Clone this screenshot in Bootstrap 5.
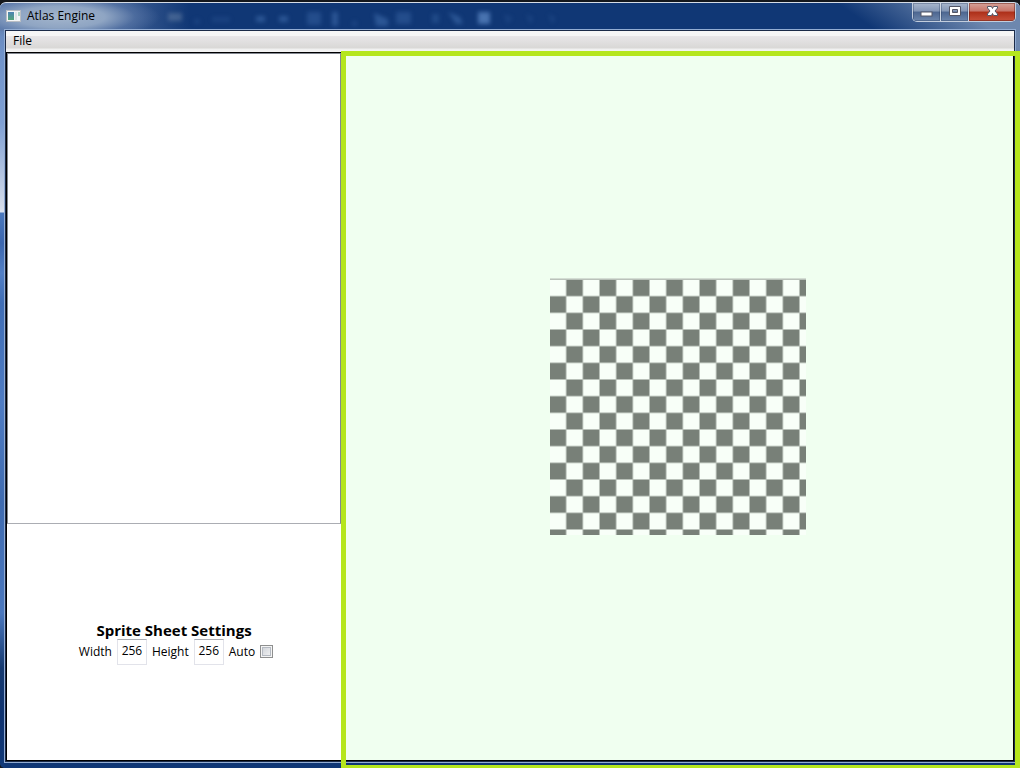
<!DOCTYPE html>
<html lang="en">
<head>
<meta charset="utf-8">
<meta name="viewport" content="width=device-width, initial-scale=1">
<title>Atlas Engine</title>
<link href="https://cdn.jsdelivr.net/npm/bootstrap@5.3.0/dist/css/bootstrap.min.css" rel="stylesheet">
<style>
  body { font-family: "Open Sans", "Noto Sans", sans-serif; font-size: 12px; line-height: 16px; color: #000; background: #14171c; }
  .desktop { padding-top: 2px; }
  .app-window {
    padding: 0 4px 5px; border-top: 1px solid #d5dce6; border-radius: 6px 6px 5px 5px;
    background:
      radial-gradient(ellipse 100px 24px at 60px 14px, #a3b5cc 0, #8fa5c3 45%, #5f7cab88 75%, #10377500 100%) no-repeat,
      linear-gradient(90deg, #6481b0 0, #5673a4 90px, #10377500 190px) 0 0 / 100% 28px no-repeat,
      linear-gradient(35deg, #10377500 0, #10377500 30%, #6d87ae 75%) 100% 0 / 190px 50px no-repeat,
      linear-gradient(180deg, #5f7fb0 0, #6f92c9 50px, #7fa0d4 120px, #d5dcea 205px, #dde3ef 209px, #4a78bd 210px, #3b66ae 240px, #527fc5 270px, #3f6db5 300px, #4f7cc3 400px, #3f6bb0 500px, #4b78be 610px, #15396f 665px, #0f3370 710px, #123a78 100%) 0 0 / 5px 100% no-repeat,
      #103775;
  }
  .title-bar { height: 26px; padding-left: 2px; }
  .app-icon { margin-top: 7px; }
  .app-title { font-size: 12px; line-height: 16px; padding: 5px 0 0 6px; }
  .glow { filter: blur(2px); }
  .caption-group { height: 19px; border: 1px solid #c2cddd; border-top: 0; border-radius: 0 0 5px 5px; overflow: hidden; }
  .caption-btn { width: 28px; border: 0; border-right: 1px solid #d0d8e4; background: linear-gradient(#a9b7cd 0, #8396b5 45%, #4c6690 50%, #6d86ac 100%); box-shadow: inset 0 0 0 1px #22365a55; }
  .caption-btn.close-btn { width: 46px; border-right: 0; background: linear-gradient(#d5a29a 0, #c77468 45%, #ad2f19 50%, #c8513b 100%); box-shadow: inset 0 0 0 1px #5d180f77; }
  .client-edge { border: 1px solid #93add3; }
  .client { border: 1px solid #1b2a48; background: #fff; }
  .menu-strip { height: 21px; background: linear-gradient(#f6f6f6 0 5px, #e8e6e8 5px, #d9d8d6 17px, #f0f0f0 18px, #f4f4f4 100%); }
  .menu-strip a { padding: 2px 7px; color: #000; line-height: 16px; }
  .workspace { display: grid; grid-template-columns: 334px 1fr; border: 1px solid #000; }
  .sprite-list { flex: 2 1 0; border: 1px solid #828790; border-bottom-color: #abadb3; }
  .settings { flex: 1 1 0; padding-top: 2px; }
  .settings h1 { font-size: 15px; line-height: 18px; font-weight: 700; }
  .setting-row { gap: 5px; padding-left: 4px; }
  .setting-row label { padding-top: 1px; }
  .size-box { width: 30px; height: 26px; padding: 0 3px 3px; border: 1px solid #e2e3ea; border-top-color: #abadb3; text-align: center; font-size: 12px; color: #000; }
  .auto-box { width: 13px; height: 13px; appearance: none; border: 1px solid #8e8f8f; background: linear-gradient(135deg, #cbcfd5, #f6f6f6); box-shadow: inset 0 0 0 1px #f4f4f4, inset 0 0 0 2px #b5bac2; }
  .stage { background: #f0fff0; padding-left: 2px; }
  .selection { inset: -2px -7px -8px 0; border: 5px solid #b5e61d; border-bottom-width: 3px; pointer-events: none; }
</style>
</head>
<body>
<div class="desktop d-flex flex-column min-vh-100">
  <div class="app-window d-flex flex-column flex-grow-1">
    <header class="title-bar d-flex align-items-start position-relative">
      <svg class="glow position-absolute top-0 start-0" width="600" height="26" aria-hidden="true">
        <g fill="#3f6cab" opacity=".6">
          <rect x="164" y="10" width="14" height="8" fill="#8aa0b8" opacity=".6"/><rect x="190" y="16" width="6" height="5" opacity=".4"/>
          <rect x="208" y="14" width="18" height="5" opacity=".4"/><rect x="252" y="13" width="9" height="6"/><rect x="275" y="13" width="9" height="6"/>
          <rect x="303" y="9" width="14" height="13" opacity=".7"/><rect x="328" y="9" width="6" height="14"/><rect x="348" y="18" width="5" height="5" opacity=".5"/>
          <path d="M370 10l14 6v7h-12z"/><rect x="392" y="9" width="15" height="12" opacity=".7"/><rect x="428" y="11" width="7" height="9" opacity=".6"/>
          <path d="M444 9l12 5 3 7h-7z"/><rect x="474" y="9" width="12" height="12" fill="#6f9bd8"/>
          <path d="M500 11l9 4-6 6zM522 11l8 4-4 6zM544 11l8 4-4 6z" opacity=".4"/>
        </g>
      </svg>
      <svg class="app-icon position-relative flex-shrink-0" width="15" height="12" aria-hidden="true">
        <defs><linearGradient id="ico" x2="0" y2="1"><stop stop-color="#4d83b4"/><stop offset="1" stop-color="#55a578"/></linearGradient></defs>
        <rect x=".5" y=".5" width="14" height="11" fill="#f4f5f6" stroke="#b9bdc3"/><rect x="2" y="2" width="6" height="8" fill="url(#ico)"/><rect x="9" y="2" width="2" height="8" fill="#dfe6e6"/><rect x="12" y="2" width="2" height="4" fill="#a9d3c3"/>
      </svg>
      <span class="app-title position-relative">Atlas Engine</span>
      <div class="caption-group d-flex ms-auto position-relative">
        <button class="caption-btn p-0 d-flex justify-content-center" type="button" aria-label="Minimize">
          <svg width="13" height="16"><rect x="1" y="9" width="11" height="4" fill="#fff" stroke="#535666"/></svg></button>
        <button class="caption-btn p-0 d-flex justify-content-center" type="button" aria-label="Maximize">
          <svg width="13" height="16"><path d="M1.500 3.500h11v9h-11zM4.500 6.500v3h5v-3z" fill="#fff" fill-rule="evenodd" stroke="#535666"/></svg></button>
        <button class="caption-btn close-btn p-0 d-flex justify-content-center" type="button" aria-label="Close">
          <svg width="13" height="16"><path d="M1.500 3.500h4l1 2 1-2h4v1.500L9 8l2.500 3v1.500h-4l-1-2-1 2h-4V11L4 8 1.500 5z" fill="#fff" stroke="#535666"/></svg></button>
      </div>
    </header>
    <div class="client-edge d-flex flex-column flex-grow-1">
      <div class="client d-flex flex-column flex-grow-1">
        <nav class="menu-strip d-flex"><a href="#" class="text-decoration-none">File</a></nav>
        <main class="workspace flex-grow-1">
          <div class="d-flex flex-column">
            <div class="sprite-list" role="listbox" aria-label="Sprites"></div>
            <form class="settings d-flex flex-column align-items-center justify-content-center">
              <h1 class="mb-0">Sprite Sheet Settings</h1>
              <div class="setting-row d-flex align-items-center">
                <label for="w">Width</label>
                <input id="w" class="size-box" type="text" value="256">
                <label for="h">Height</label>
                <input id="h" class="size-box" type="text" value="256">
                <label for="auto">Auto</label>
                <input id="auto" class="auto-box" type="checkbox">
              </div>
            </form>
          </div>
          <div class="stage position-relative d-flex align-items-center justify-content-center">
            <svg width="256" height="257" viewBox="0 0 768 771" aria-label="Sprite sheet preview">
              <defs>
                <pattern id="checks" width="100" height="100" patternUnits="userSpaceOnUse" y="3">
                  <rect width="100" height="100" fill="#f8fff8"/>
                  <path d="M50 0h50v50H50zM0 50h50v50H0z" fill="#788078"/>
                  <path d="M0 1.500h100M0 51.500h100M48.500 0v100M98.500 0v100" stroke="#b9c1b9" stroke-width="3"/>
                </pattern>
              </defs>
              <rect y="3" width="768" height="768" fill="url(#checks)"/>
              <path d="M0 1.500h768" stroke="#d3ddd3" stroke-width="3"/>
            </svg>
            <div class="selection position-absolute"></div>
          </div>
        </main>
      </div>
    </div>
  </div>
</div>
<script src="https://cdn.jsdelivr.net/npm/bootstrap@5.3.0/dist/js/bootstrap.bundle.min.js"></script>
</body>
</html>
